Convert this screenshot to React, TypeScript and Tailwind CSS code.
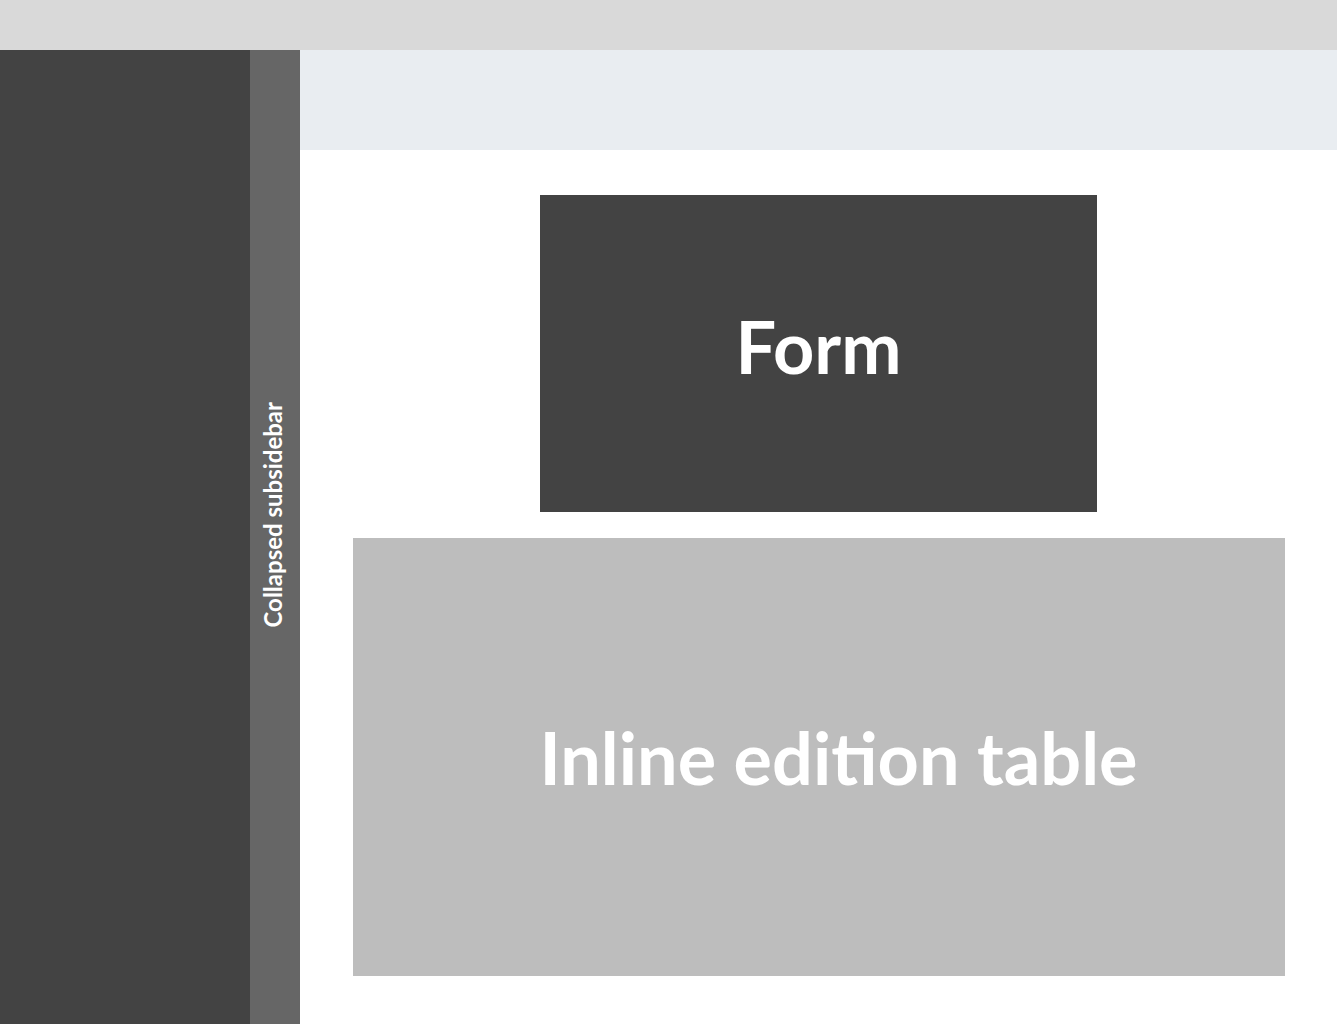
export default function App() {
  return (
    <div
      className="w-[1337px] h-[1024px] flex flex-col bg-white overflow-hidden"
      style={{ fontFamily: 'Lato, "Open Sans", sans-serif' }}
    >
      {/* Top bar */}
      <div className="h-[50px] shrink-0 bg-[#d9d9d9]" />

      <div className="flex flex-1 min-h-0">
        {/* Sidebar */}
        <div className="w-[250px] shrink-0 bg-[#434343]" />

        {/* Collapsed subsidebar */}
        <div className="w-[50px] shrink-0 bg-[#666666] flex items-start justify-center pt-[352px] pr-[4px]">
          <span className="[writing-mode:vertical-rl] rotate-180 text-white font-bold text-[24px] leading-none">
            Collapsed subsidebar
          </span>
        </div>

        {/* Main */}
        <div className="flex-1 flex flex-col">
          <div className="h-[100px] shrink-0 bg-[#e9edf1]" />
          <div className="flex flex-col items-center pt-[45px]">
            <div className="w-[557px] h-[317px] bg-[#434343] flex items-center justify-center pb-[16px]">
              <span className="text-white font-bold text-[72px] leading-none">Form</span>
            </div>
            <div className="mt-[26px] w-[932px] h-[438px] bg-[#bdbdbd] flex items-center justify-center pl-[40px]">
              <span className="text-white font-bold text-[72px] leading-none">Inline edition table</span>
            </div>
          </div>
        </div>
      </div>
    </div>
  );
}
